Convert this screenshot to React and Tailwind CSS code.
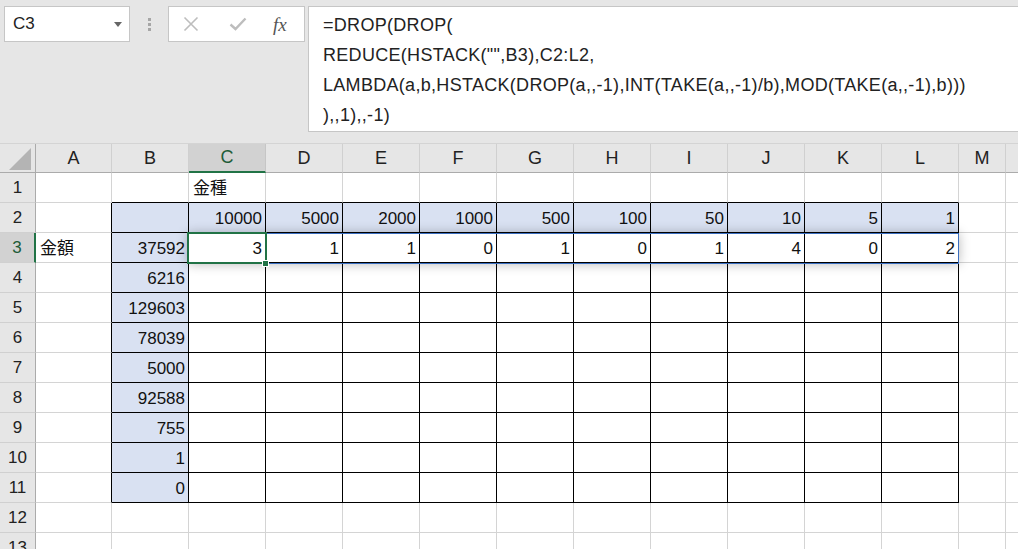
import React from "react";

const FONT = "font-['Liberation_Sans','Noto_Sans_CJK_JP',sans-serif]";

const COLS = [
  { key: "A", w: "w-[76px]" },
  { key: "B", w: "w-[77px]" },
  { key: "C", w: "w-[77px]" },
  { key: "D", w: "w-[77px]" },
  { key: "E", w: "w-[77px]" },
  { key: "F", w: "w-[77px]" },
  { key: "G", w: "w-[77px]" },
  { key: "H", w: "w-[77px]" },
  { key: "I", w: "w-[77px]" },
  { key: "J", w: "w-[77px]" },
  { key: "K", w: "w-[77px]" },
  { key: "L", w: "w-[77px]" },
  { key: "M", w: "w-[47px]" },
  { key: "", w: "w-[100px]" },
];

const coins = [10000, 5000, 2000, 1000, 500, 100, 50, 10, 5, 1];
const counts = [3, 1, 1, 0, 1, 0, 1, 4, 0, 2];
const amounts = [37592, 6216, 129603, 78039, 5000, 92588, 755, 1, 0];

// cell value for (row, colIndex)
function valueOf(r, c) {
  if (r === 1 && c === 2) return { text: "金種", left: true };
  if (r === 3 && c === 0) return { text: "金額", left: true };
  if (r === 2 && c >= 2 && c <= 11) return { text: coins[c - 2] };
  if (r === 3 && c >= 2 && c <= 11) return { text: counts[c - 2] };
  if (c === 1 && r >= 3 && r <= 11) return { text: amounts[r - 3] };
  return null;
}

function Cell({ r, c, w }) {
  const inTable = r >= 2 && r <= 11 && c >= 1 && c <= 11;
  const filled = (c === 1 && r >= 2 && r <= 11) || (r === 2 && c >= 2 && c <= 11);
  const blackRight = inTable || (c === 0 && r >= 2 && r <= 11);
  const blackBottom = (r >= 1 && r <= 11 && c >= 1 && c <= 11);
  const v = valueOf(r, c);

  return (
    <div
      className={`${w} h-full shrink-0 border-r border-b flex items-center pt-[2px] text-[17px] text-[#111] ${
        blackRight ? "border-r-black" : "border-r-[#d4d4d4]"
      } ${blackBottom ? "border-b-black" : "border-b-[#d4d4d4]"} ${
        filled ? "bg-[#d9e1f2]" : "bg-white"
      } ${v && v.left ? "justify-start pl-[4px]" : "justify-end pr-[3px]"}`}
    >
      {v ? v.text : ""}
    </div>
  );
}

function ColumnHeader() {
  return (
    <div className="flex h-[30px] border-t border-t-[#d4d4d4]">
      <div className="w-[36px] shrink-0 border-r border-r-[#ababab] border-b border-b-[#ababab] bg-[#e6e6e6] relative">
        <svg className="absolute left-[9px] top-[4px]" width="23" height="23" viewBox="0 0 23 23">
          <polygon points="22,0 22,22 0,22" fill="#b4b4b4" />
        </svg>
      </div>
      {COLS.map((col) =>
        col.key === "C" ? (
          <div
            key={col.key}
            className={`${col.w} shrink-0 flex items-center justify-center border-r border-r-[#c6c6c6] border-b-2 border-b-[#217346] bg-[#d2d2d2] text-[18px] text-[#1f5c38]`}
          >
            {col.key}
          </div>
        ) : (
          <div
            key={col.key || "N"}
            className={`${col.w} shrink-0 flex items-center justify-center border-r border-r-[#d0d0d0] border-b border-b-[#ababab] bg-[#e6e6e6] text-[18px] text-[#222]`}
          >
            {col.key}
          </div>
        )
      )}
    </div>
  );
}

function Row({ r }) {
  const active = r === 3;
  return (
    <div className="flex h-[30px]">
      <div
        className={`w-[36px] shrink-0 flex items-center justify-center border-b border-b-[#d0d0d0] text-[17px] ${
          active
            ? "bg-[#d2d2d2] border-r-2 border-r-[#217346] text-[#1f5c38]"
            : "bg-[#e6e6e6] border-r border-r-[#ababab] text-[#222]"
        }`}
      >
        {r}
      </div>
      {COLS.map((col, c) => (
        <Cell key={c} r={r} c={c} w={col.w} />
      ))}
    </div>
  );
}

function FormulaBar() {
  return (
    <div className="flex items-start h-[144px] pt-[6px] pl-[4px]">
      {/* name box */}
      <div className="w-[126px] h-[36px] shrink-0 bg-white border border-[#c6c6c6] flex items-center justify-between pl-[8px] pr-[7px]">
        <span className="text-[17px] text-[#222]">C3</span>
        <svg width="8" height="5" viewBox="0 0 8 5">
          <polygon points="0,0 8,0 4,5" fill="#666" />
        </svg>
      </div>
      {/* grip dots */}
      <div className="w-[38px] h-[36px] shrink-0 flex flex-col items-center justify-center gap-[2px]">
        <div className="w-[3px] h-[3px] bg-[#a6a6a6]" />
        <div className="w-[3px] h-[3px] bg-[#a6a6a6]" />
        <div className="w-[3px] h-[3px] bg-[#a6a6a6]" />
      </div>
      {/* cancel / enter / fx */}
      <div className="w-[137px] h-[36px] shrink-0 bg-white border border-[#c6c6c6] flex items-center">
        <svg className="ml-[14px]" width="16" height="16" viewBox="0 0 16 16">
          <path d="M1.5 1.5 L14.5 14.5 M14.5 1.5 L1.5 14.5" stroke="#bdbdbd" strokeWidth="1.6" />
        </svg>
        <svg className="ml-[30px]" width="18" height="14" viewBox="0 0 18 14">
          <path d="M1.5 7.5 L6.5 12 L16.5 1.5" stroke="#bdbdbd" strokeWidth="2.4" fill="none" />
        </svg>
        <span className="ml-[26px] text-[19px] italic text-[#555] font-['Liberation_Serif',serif] leading-none">
          fx
        </span>
      </div>
      {/* formula */}
      <div className="ml-[3px] w-[760px] h-[126px] shrink-0 bg-white border border-[#c6c6c6] pl-[14px] pt-[3px] text-[18px] leading-[30px] tracking-[0.3px] text-[#222]">
        <div>=DROP(DROP(</div>
        <div>REDUCE(HSTACK("",B3),C2:L2,</div>
        <div>LAMBDA(a,b,HSTACK(DROP(a,,-1),INT(TAKE(a,,-1)/b),MOD(TAKE(a,,-1),b)))</div>
        <div>),,1),,-1)</div>
      </div>
    </div>
  );
}

export default function App() {
  const rows = [1, 2, 3, 4, 5, 6, 7, 8, 9, 10, 11, 12, 13];
  return (
    <div className={`w-[1018px] h-[549px] overflow-hidden bg-[#e6e6e6] relative ${FONT}`}>
      <FormulaBar />
      <div className="w-[1200px] -mt-[1px]">
        <ColumnHeader />
        {rows.map((r) => (
          <Row key={r} r={r} />
        ))}
      </div>

      {/* spill range outline with shadow */}
      <div className="absolute left-[188px] top-[233px] w-[771px] h-[31px] border border-[#3b6fc0] shadow-[0_0_12px_rgba(0,0,0,0.28)] pointer-events-none" />

      {/* active cell */}
      <div className="absolute left-[187px] top-[232px] w-[80px] h-[32px] border-2 border-[#217346] pointer-events-none" />
      <div className="absolute left-[262px] top-[260px] w-[7px] h-[7px] bg-[#217346] border border-white" />
    </div>
  );
}
